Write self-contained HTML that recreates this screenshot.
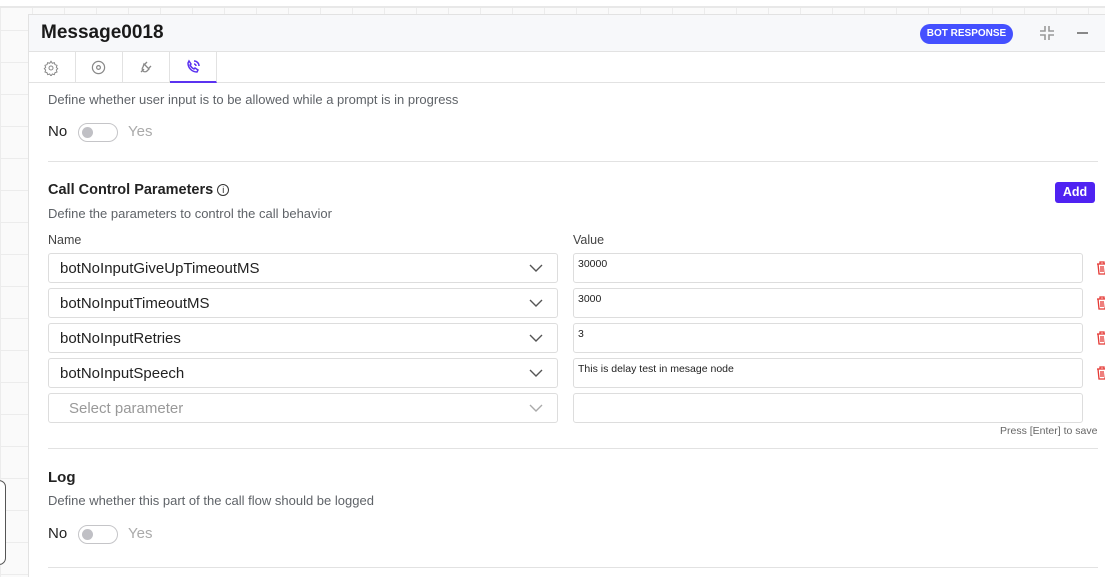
<!DOCTYPE html>
<html style="width:1105px;height:577px;overflow:hidden"><head><meta charset="utf-8"><style>
*{box-sizing:border-box;margin:0;padding:0}
body{width:1105px;height:577px;overflow:hidden;font-family:"Liberation Sans",sans-serif;background:#fafafa;position:relative;
background-image:linear-gradient(#ececec 1px,transparent 1px),linear-gradient(90deg,#ececec 1px,transparent 1px);background-size:32px 32px;background-position:0 -2px}
.topbar{position:absolute;left:0;top:0;width:1105px;height:8px;background:#fff;border-bottom:2px solid #e8e8e8}
.panel{position:absolute;left:28px;top:14px;width:1090px;height:563px;background:#fff;border:1px solid #e2e2e2;border-bottom:none;overflow:hidden}
.hdr{height:37px;background:#f7f8fa;border-bottom:1px solid #e2e2e2;position:relative}
.hdr h1{position:absolute;left:12px;top:7px;font-size:19px;font-weight:bold;color:#1a1a1a}
.badge{position:absolute;left:891px;top:9px;width:93px;height:20px;border-radius:10px;background:#4450ff;color:#fff;font-size:10px;font-weight:bold;text-align:center;line-height:20px}
.tabs{height:31px;border-bottom:1px solid #e2e2e2;position:relative}
.tab{position:absolute;top:0;height:31px;width:47px;border-right:1px solid #e2e2e2}
.t{position:absolute;color:#222;white-space:nowrap}
.sub{font-size:13px;color:#5f6368}
.lbl{font-size:12.5px;color:#444}
.sel{position:absolute;left:19px;width:510px;height:30px;border:1px solid #ddd;border-radius:3px;font-size:15px;color:#222;padding:6px 0 0 11px}
.val{position:absolute;left:544px;width:510px;height:30px;border:1px solid #ddd;border-radius:3px;font-size:10.5px;color:#222;padding:4px 0 0 4px}
.chev{position:absolute;right:14px;top:10px}
.trash{position:absolute;left:1067px}
.tog{position:absolute;width:40px;height:19px;border:1px solid #c5c5c8;border-radius:10px}
.tog:after{content:"";position:absolute;left:3px;top:3px;width:11px;height:11px;border-radius:50%;background:#c0c0c5}
.hr{position:absolute;left:19px;width:1050px;height:1px;background:#e2e2e2}
</style></head><body>
<div class="topbar"></div>
<div style="position:absolute;left:-10px;top:480px;width:16px;height:85px;border:1.5px solid #555;border-radius:7px;background:#fff"></div>
<div class="panel">
 <div class="hdr"><h1>Message0018</h1><div class="badge">BOT RESPONSE</div>
  <svg style="position:absolute;left:1010px;top:10px" width="16" height="16" viewBox="0 0 16 16" fill="none" stroke="#999" stroke-width="1.6"><path d="M6 1v5H1M10 1v5h5M6 15v-5H1M10 15v-5h5"/></svg>
  <div style="position:absolute;left:1048px;top:17px;width:11px;height:2px;background:#888"></div>
 </div>
 <div class="tabs">
  <div class="tab" style="left:0"><svg style="position:absolute;left:14px;top:8px" width="16" height="16" viewBox="0 0 24 24" fill="none" stroke="#888" stroke-width="1.5"><circle cx="12" cy="12" r="3"/><path d="M12 2l2 3 3-1 1 3 3 1-1 3 2 2-2 2 1 3-3 1-1 3-3-1-2 3-2-3-3 1-1-3-3-1 1-3-2-2 2-2-1-3 3-1 1-3 3 1z"/></svg></div>
  <div class="tab" style="left:47px"><svg style="position:absolute;left:15px;top:8px" width="15" height="15" viewBox="0 0 16 16" fill="none" stroke="#888" stroke-width="1.3"><circle cx="8" cy="8" r="6.5"/><circle cx="8" cy="8" r="2"/></svg></div>
  <div class="tab" style="left:94px"><svg style="position:absolute;left:15px;top:7px" width="16" height="16" viewBox="0 0 16 16" fill="none" stroke="#888" stroke-width="1.3"><path d="M3 13l3-3M6 5l5 5-2 2a3 3 0 0 1-4 0 3 3 0 0 1 0-4zM9 3L7 5M13 7l-2 2"/></svg></div>
  <div class="tab" style="left:141px;border-bottom:2px solid #5b32f0"><svg style="position:absolute;left:15px;top:7px" width="16" height="16" viewBox="0 0 16 16" fill="none" stroke="#5b32f0" stroke-width="1.5"><path d="M3 4c0 5 4 9 9 9l1-2-3-2-1 1c-2-1-3-2-4-4l1-1-2-3z"/><path d="M9 2a5 5 0 0 1 5 5M9 5a2 2 0 0 1 2 2"/></svg></div>
 </div>
 <div class="t sub" style="left:19px;top:77px">Define whether user input is to be allowed while a prompt is in progress</div>
 <div class="t" style="left:19px;top:108px;font-size:15px">No</div><div class="tog" style="left:49px;top:108px"></div><div class="t" style="left:99px;top:108px;font-size:15px;color:#aaa">Yes</div>
 <div class="hr" style="top:146px"></div>
 <div class="t" style="left:19px;top:167px;font-size:14.5px;font-weight:bold">Call Control Parameters <span style="display:inline-block;width:12px;height:12px;border:1px solid #333;border-radius:50%;font-size:9px;text-align:center;line-height:10px;font-weight:normal;vertical-align:1px">i</span></div>
 <div style="position:absolute;left:1026px;top:167px;width:40px;height:21px;border-radius:3px;background:#4f22f2;color:#fff;font-size:12.5px;font-weight:bold;text-align:center;line-height:21px">Add</div>
 <div class="t sub" style="left:19px;top:191px">Define the parameters to control the call behavior</div>
 <div class="t lbl" style="left:19px;top:218px">Name</div><div class="t lbl" style="left:544px;top:218px">Value</div>
 <div class="sel" style="top:238px">botNoInputGiveUpTimeoutMS<svg class="chev" width="14" height="9" viewBox="0 0 14 9"><path d="M1 1l6 6 6-6" fill="none" stroke="#555" stroke-width="1.4"/></svg></div>
 <div class="val" style="top:238px">30000</div>
 <div class="sel" style="top:273px">botNoInputTimeoutMS<svg class="chev" width="14" height="9" viewBox="0 0 14 9"><path d="M1 1l6 6 6-6" fill="none" stroke="#555" stroke-width="1.4"/></svg></div>
 <div class="val" style="top:273px">3000</div>
 <div class="sel" style="top:308px">botNoInputRetries<svg class="chev" width="14" height="9" viewBox="0 0 14 9"><path d="M1 1l6 6 6-6" fill="none" stroke="#555" stroke-width="1.4"/></svg></div>
 <div class="val" style="top:308px">3</div>
 <div class="sel" style="top:343px">botNoInputSpeech<svg class="chev" width="14" height="9" viewBox="0 0 14 9"><path d="M1 1l6 6 6-6" fill="none" stroke="#555" stroke-width="1.4"/></svg></div>
 <div class="val" style="top:343px">This is delay test in mesage node</div>
 <div class="sel" style="top:378px;color:#999;padding-left:20px">Select parameter<svg class="chev" width="14" height="9" viewBox="0 0 14 9"><path d="M1 1l6 6 6-6" fill="none" stroke="#aaa" stroke-width="1.4"/></svg></div>
 <div class="val" style="top:378px"></div>
 <svg class="trash" style="top:246px" width="12" height="14" viewBox="0 0 12 14" fill="none" stroke="#e53935" stroke-width="1.3"><path d="M1 3h10M4 3V1h4v2M2 3l1 10h6l1-10M5 5v6M7 5v6"/></svg>
 <svg class="trash" style="top:281px" width="12" height="14" viewBox="0 0 12 14" fill="none" stroke="#e53935" stroke-width="1.3"><path d="M1 3h10M4 3V1h4v2M2 3l1 10h6l1-10M5 5v6M7 5v6"/></svg>
 <svg class="trash" style="top:316px" width="12" height="14" viewBox="0 0 12 14" fill="none" stroke="#e53935" stroke-width="1.3"><path d="M1 3h10M4 3V1h4v2M2 3l1 10h6l1-10M5 5v6M7 5v6"/></svg>
 <svg class="trash" style="top:351px" width="12" height="14" viewBox="0 0 12 14" fill="none" stroke="#e53935" stroke-width="1.3"><path d="M1 3h10M4 3V1h4v2M2 3l1 10h6l1-10M5 5v6M7 5v6"/></svg>
 <div class="t" style="left:971px;top:410px;font-size:10.5px;color:#666">Press [Enter] to save</div>
 <div class="hr" style="top:433px"></div>
 <div class="t" style="left:19px;top:454px;font-size:15px;font-weight:bold">Log</div>
 <div class="t sub" style="left:19px;top:478px">Define whether this part of the call flow should be logged</div>
 <div class="t" style="left:19px;top:510px;font-size:15px">No</div><div class="tog" style="left:49px;top:510px"></div><div class="t" style="left:99px;top:510px;font-size:15px;color:#aaa">Yes</div>
 <div class="hr" style="top:552px"></div>
</div>
</body></html>
